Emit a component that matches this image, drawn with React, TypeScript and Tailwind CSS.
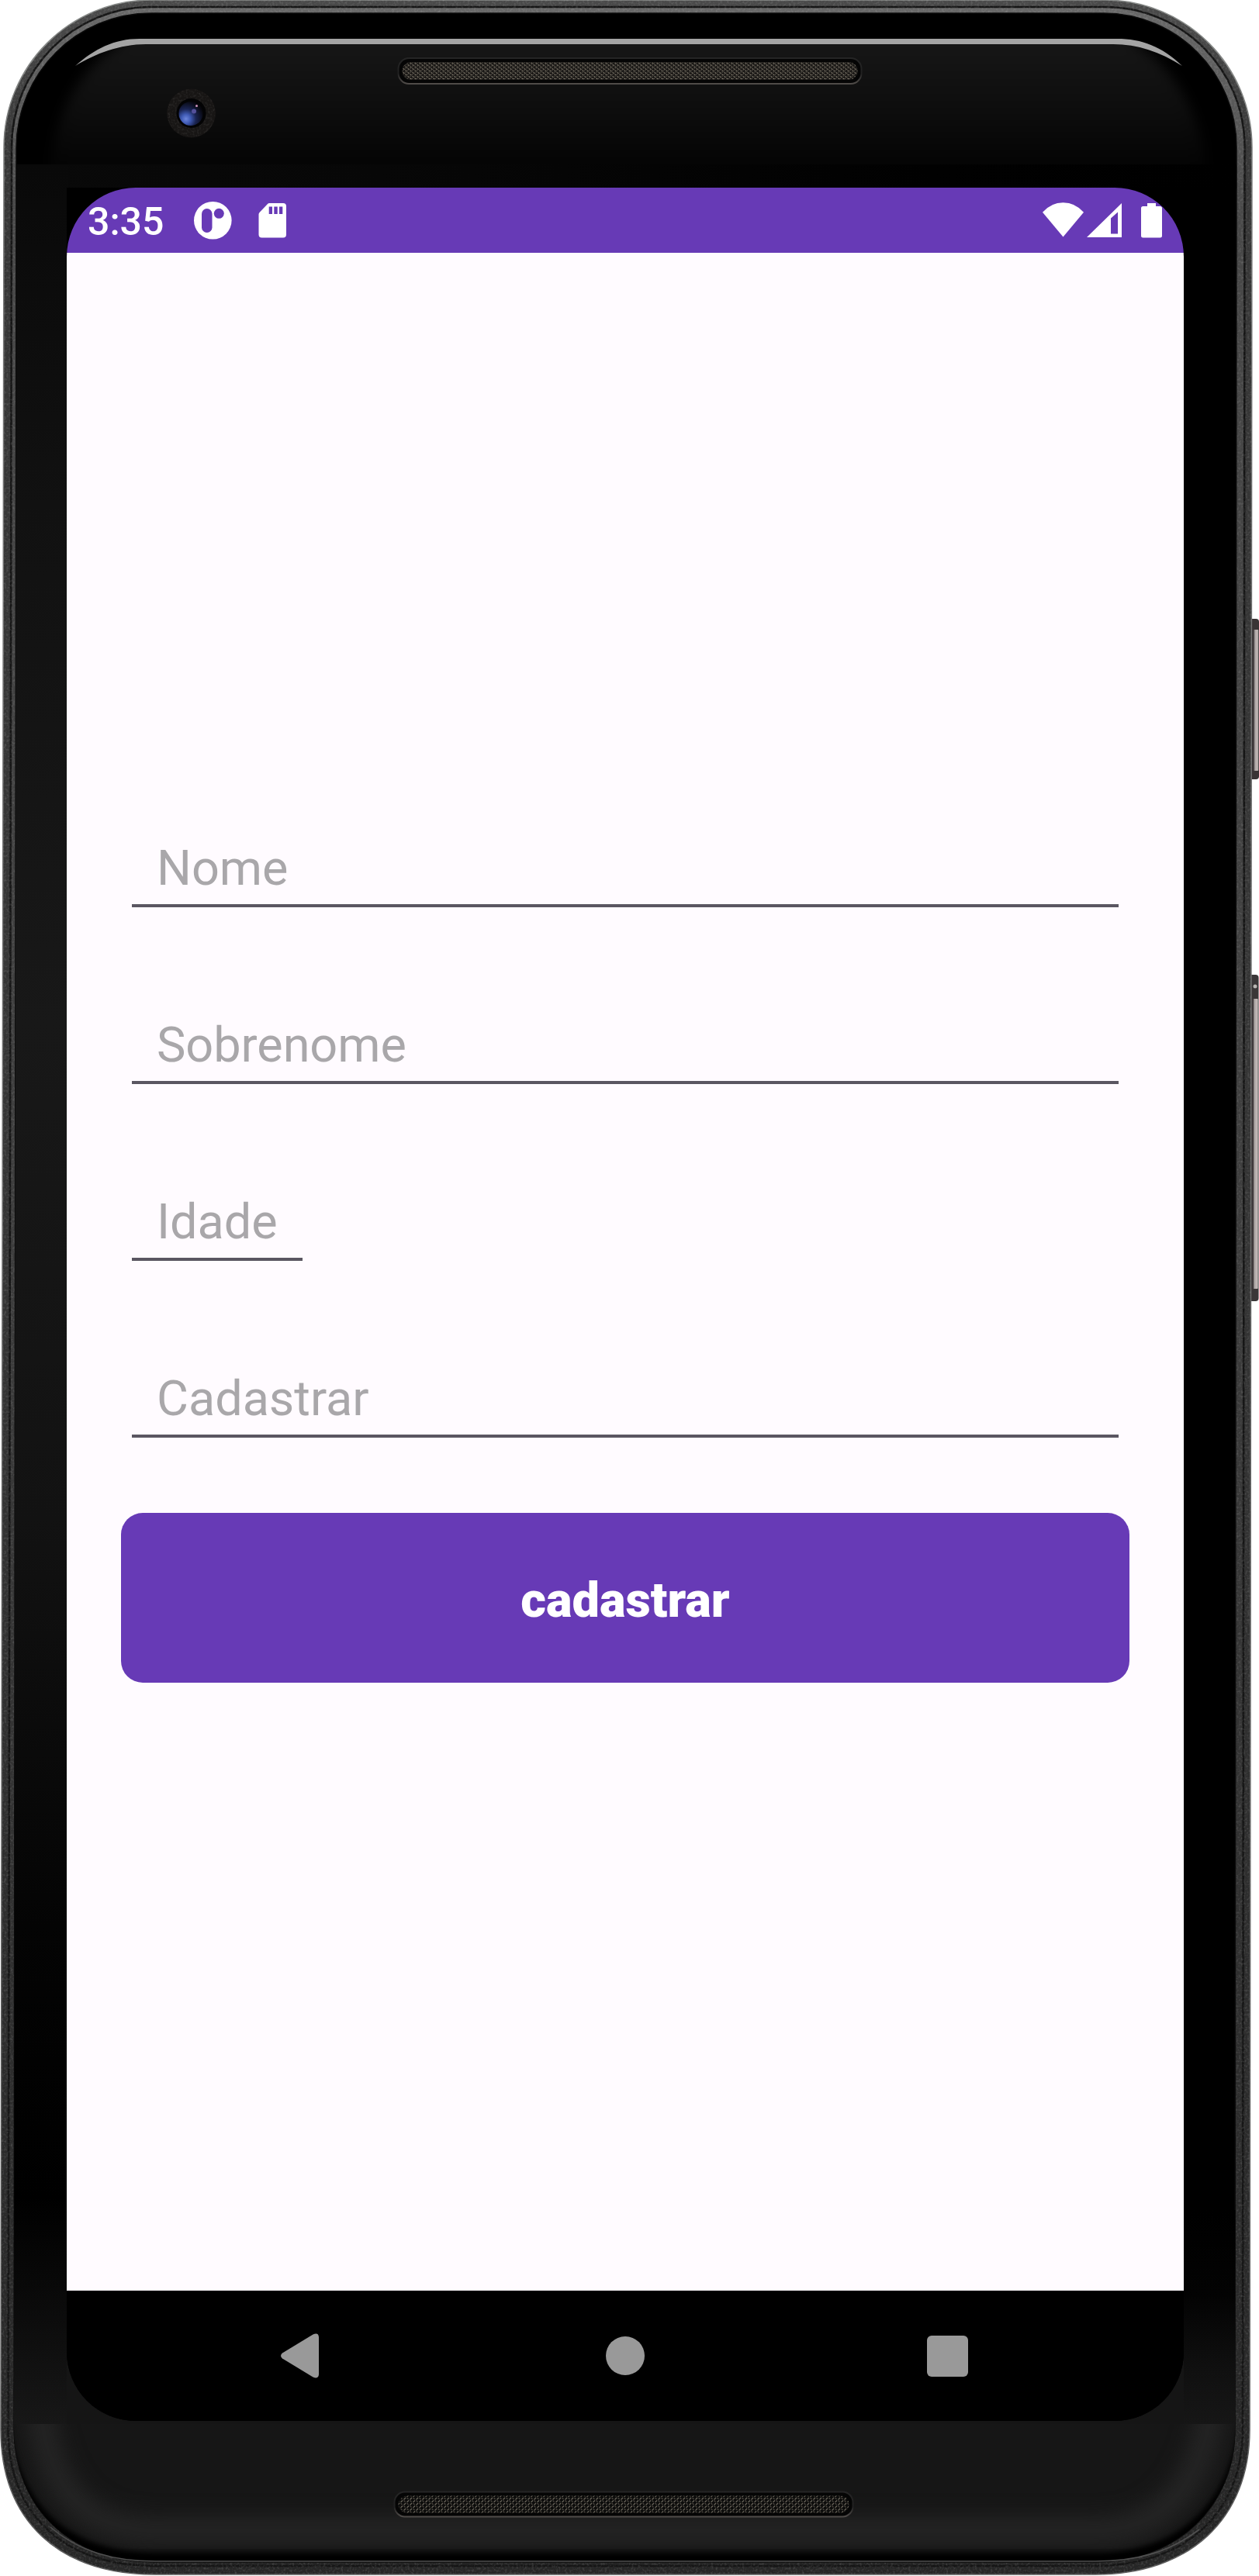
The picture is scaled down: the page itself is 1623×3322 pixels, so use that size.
import React from "react";

const OUTER =
  "M195 0H1424C1529 0 1614 85 1614 190L1611 3133C1611 3250 1532 3320 1412 3320H200C75 3320 1 3250 1 3133L5 190C5 85 90 0 195 0Z";
const GROOVE =
  "M195 9H1424C1524 9 1604.500 89 1604.500 190L1602 3133C1602 3242 1526 3309 1412 3309H200C81 3309 11 3242 10.500 3133L15 190C15 89 95 9 195 9Z";
const GLASS =
  "M195 17H1422C1517 17 1594 94 1594 190L1592 3133C1592 3233 1516 3304 1412 3304H200C90 3304 19 3233 18 3133L21 190C22 94 99 17 195 17Z";

function Speaker({ x, y, width, height, mesh }: { x: number; y: number; width: number; height: number; mesh: string }) {
  return (
    <g>
      <rect x={x} y={y} width={width} height={height} rx={height * 0.42} fill="#050505" stroke="url(#speakerEdge)" strokeWidth="2" />
      <rect x={x + 5} y={y + 5} width={width - 10} height={height - 10} rx={height * 0.36} fill={`url(#${mesh})`} />
    </g>
  );
}

function PhoneShell() {
  return (
    <svg className="absolute inset-0" width="1623" height="3322" viewBox="0 0 1623 3322" aria-hidden="true">
      <defs>
        <linearGradient id="rim" x1="0" y1="0" x2="0" y2="1">
          <stop offset="0" stopColor="#4a4a4a" />
          <stop offset="0.06" stopColor="#373737" />
          <stop offset="0.5" stopColor="#343434" />
          <stop offset="1" stopColor="#262626" />
        </linearGradient>
        <linearGradient id="innerRim" x1="0" y1="0" x2="0" y2="1">
          <stop offset="0" stopColor="#686868" />
          <stop offset="0.08" stopColor="#484848" />
          <stop offset="0.5" stopColor="#3c3c3c" />
          <stop offset="1" stopColor="#242424" />
        </linearGradient>
        <linearGradient id="rimEdge" x1="0" y1="0" x2="0" y2="1">
          <stop offset="0" stopColor="#8a8d8b" />
          <stop offset="0.1" stopColor="#777777" />
          <stop offset="1" stopColor="#5c5c5c" />
        </linearGradient>
        <linearGradient id="topSheen" x1="0" y1="56" x2="0" y2="212" gradientUnits="userSpaceOnUse">
          <stop offset="0" stopColor="#161616" />
          <stop offset="0.5" stopColor="#0e0e0e" />
          <stop offset="1" stopColor="#040404" />
        </linearGradient>
        <linearGradient id="topSeam" x1="18" y1="0" x2="1594" y2="0" gradientUnits="userSpaceOnUse">
          <stop offset="0" stopColor="#090909" />
          <stop offset="0.3" stopColor="#070707" />
          <stop offset="0.75" stopColor="#010101" />
          <stop offset="1" stopColor="#000000" />
        </linearGradient>
        <linearGradient id="leftBezel" x1="0" y1="212" x2="0" y2="3126" gradientUnits="userSpaceOnUse">
          <stop offset="0" stopColor="#090909" />
          <stop offset="0.15" stopColor="#111111" />
          <stop offset="0.38" stopColor="#181818" />
          <stop offset="0.6" stopColor="#121212" />
          <stop offset="0.78" stopColor="#040404" />
          <stop offset="0.9" stopColor="#000000" />
          <stop offset="0.94" stopColor="#090909" />
          <stop offset="1" stopColor="#171717" />
        </linearGradient>
        <linearGradient id="rightBezel" x1="0" y1="2850" x2="0" y2="3126" gradientUnits="userSpaceOnUse">
          <stop offset="0" stopColor="#000000" />
          <stop offset="0.4" stopColor="#030303" />
          <stop offset="0.75" stopColor="#101010" />
          <stop offset="1" stopColor="#161616" />
        </linearGradient>
        <linearGradient id="speakerEdge" x1="0" y1="0" x2="0" y2="1">
          <stop offset="0" stopColor="#252525" />
          <stop offset="0.6" stopColor="#202020" />
          <stop offset="1" stopColor="#504c49" />
        </linearGradient>
        <linearGradient id="sideKey" x1="0" y1="0" x2="1" y2="0">
          <stop offset="0" stopColor="#2b2728" />
          <stop offset="0.35" stopColor="#453f41" />
          <stop offset="0.5" stopColor="#aaa3a2" />
          <stop offset="0.85" stopColor="#c3bab8" />
          <stop offset="1" stopColor="#777070" />
        </linearGradient>
        <pattern id="meshTop" width="6" height="5" patternUnits="userSpaceOnUse">
          <rect width="6" height="5" fill="#1a1816" />
          <path d="M0.500 1L2.500 2M3.500 3.500L5.500 4.500" stroke="#898273" strokeWidth="1.200" />
          <path d="M4.500 0.500L3 2M1.500 3L0.500 4.500" stroke="#544f47" strokeWidth="1" />
        </pattern>
        <pattern id="meshBottom" width="8" height="7" patternUnits="userSpaceOnUse">
          <rect width="8" height="7" fill="#0c0c0b" />
          <path d="M0.500 3.500L3 1M4.500 7L7 4.500" stroke="#6e695e" strokeWidth="1.200" />
          <path d="M4.500 1L6.500 3M0.500 4.500L2.500 6.500" stroke="#4a463f" strokeWidth="1.200" />
        </pattern>
        <radialGradient id="lens" cx="0.3" cy="0.72" r="0.75">
          <stop offset="0" stopColor="#6d86dc" />
          <stop offset="0.25" stopColor="#405bb5" />
          <stop offset="0.55" stopColor="#1a2452" />
          <stop offset="1" stopColor="#07070d" />
        </radialGradient>
        <clipPath id="glassClip">
          <path d={GLASS} />
        </clipPath>
        <clipPath id="topClip">
          <path d="M30 212V140L97 85C123 69 155 57 188 57H1435C1466 57 1496 67 1524 85L1590 140V212Z" />
        </clipPath>
        <clipPath id="bottomClip">
          <rect y="3126" width="1623" height="196" />
        </clipPath>
        <filter id="soft" colorInterpolationFilters="sRGB">
          <feGaussianBlur stdDeviation="8" />
        </filter>
        <filter id="softNarrow" colorInterpolationFilters="sRGB">
          <feGaussianBlur stdDeviation="3" />
        </filter>
        <filter id="softWide" colorInterpolationFilters="sRGB">
          <feGaussianBlur stdDeviation="13" />
        </filter>
        <filter id="grain" x="0" y="0" width="100%" height="100%">
          <feTurbulence type="fractalNoise" baseFrequency="0.35" numOctaves="2" seed="4" />
          <feColorMatrix values="0 0 0 0 1  0 0 0 0 1  0 0 0 0 1  1.600 0 0 0 -0.720" />
          <feComposite in2="SourceGraphic" operator="in" />
        </filter>
      </defs>

      {/* Side keys */}
      <rect x="1610" y="798" width="13" height="207" rx="4" fill="#3a3435" />
      <rect x="1613" y="812" width="9.500" height="182" rx="1" fill="url(#sideKey)" />
      <rect x="1610" y="1257" width="12.500" height="421" rx="4" fill="#3a3637" />
      <rect x="1612" y="1288" width="10" height="374" rx="1" fill="url(#sideKey)" />
      <circle cx="1618" cy="1272" r="2.500" fill="#b8b5b2" />

      {/* Metal rim */}
      <path d={OUTER} fill="url(#rim)" />
      <path d={OUTER} fill="none" stroke="url(#rimEdge)" strokeWidth="1.500" />
      <path d={GROOVE} fill="url(#innerRim)" stroke="#151515" strokeWidth="2.500" />
      <path d={`${OUTER}${GLASS}`} fillRule="evenodd" fill="#ffffff" filter="url(#grain)" opacity="0.2" />
      <path d={GLASS} fill="#000000" stroke="#0b0b0b" strokeWidth="1.500" />

      {/* Glass face */}
      <g clipPath="url(#glassClip)">
        <g clipPath="url(#topClip)">
          <path d="M60 300C60 190 75 110 150 60L190 30H1424L1470 60C1540 110 1562 190 1562 300Z" fill="url(#topSheen)" filter="url(#soft)" />
        </g>
        <rect x="18" y="212" width="1576" height="31" fill="url(#topSeam)" />
        <rect x="18" y="212" width="70" height="2914" fill="url(#leftBezel)" />
        <rect x="1524" y="2850" width="70" height="276" fill="url(#rightBezel)" />
        <rect x="86" y="3030" width="1440" height="96" fill="#151515" />
        <rect x="86" y="242" width="90" height="90" fill="#000000" />
        <g clipPath="url(#bottomClip)">
          <rect y="3126" width="1623" height="196" fill="#161616" />
          <path d="M48 3040C48 3190 90 3264 205 3264H1412C1510 3264 1566 3190 1566 3040" fill="none" stroke="#242424" strokeWidth="36" filter="url(#softWide)" />
          <path
            d="M12 3120C22 3232 92 3292 200 3292H1412C1516 3292 1586 3232 1598 3120V3330H12Z"
            fill="#000000"
            filter="url(#softNarrow)"
          />
        </g>
      </g>
      <path d="M65 3259C103 3291 147 3303 200 3303H1412C1466 3303 1508 3291 1546 3262" fill="none" stroke="#505050" strokeWidth="1.600" />
      <path d="M97 85C122 63 147 50 180 50H1440C1472 50 1498 60 1524 85C1496 67 1466 57 1435 57H188C155 57 123 69 97 85Z" fill="#a4a4a4" />

      <Speaker x={513.5} y={75} width={597} height={33} mesh="meshTop" />
      <Speaker x={508.5} y={3213.5} width={591} height={32} mesh="meshBottom" />

      {/* Front camera */}
      <circle cx="246.500" cy="146" r="31.500" fill="#171514" />
      <circle cx="246.500" cy="146" r="31" fill="#ffffff" filter="url(#grain)" opacity="0.13" />
      <circle cx="246.500" cy="146" r="19" fill="#030304" />
      <circle cx="246" cy="146.500" r="15.500" fill="url(#lens)" />
      <circle cx="250" cy="143.500" r="3" fill="#54509a" />
      <circle cx="253.500" cy="136.500" r="1.500" fill="#d196bd" />
    </svg>
  );
}

function StatusBar() {
  return (
    <header className="flex h-[84px] items-start bg-[#673ab6] pl-[27px] text-white">
      <span className="mt-[15px] w-[137px] text-[50px] leading-[59px] font-medium">3:35</span>
      <svg className="mt-[18px]" width="49" height="49" viewBox="0 0 49 49">
        <circle cx="24.300" cy="24.300" r="24.300" fill="currentColor" />
        <rect x="10" y="9" width="13.500" height="31" rx="6.750" fill="#673ab6" />
        <circle cx="32.300" cy="15.300" r="6.500" fill="#673ab6" />
      </svg>
      <svg className="mt-5 ml-[34px]" width="36" height="45" viewBox="0 0 36 45">
        <path
          fill="currentColor"
          fillRule="evenodd"
          d="M14 0H32Q36 0 36 4V40.500Q36 44.500 32 44.500H4.500Q0.500 44.500 0.500 40.500V14.500Q0.500 13 1.500 12L12 1Q13 0 14 0ZM13.700 4.500V14H18V4.500ZM20.300 4.500V14H24.700V4.500ZM27 4.500V14H31.300V4.500Z"
        />
      </svg>
      <svg className="mt-[19px] mr-1 ml-auto" width="53" height="45" viewBox="0 0 53 45">
        <path fill="currentColor" d="M26.500 44.500L0 12.800Q11 0.300 26.500 0.300T53 12.800Z" />
      </svg>
      <svg className="mt-5" width="45" height="44" viewBox="0 0 45 44">
        <path fill="currentColor" fillRule="evenodd" d="M45 0V44H0ZM40 11.500L31 19.500V39.500H40Z" />
      </svg>
      <svg className="mt-5 mr-7 ml-[25px]" width="27" height="45" viewBox="0 0 27 45">
        <path
          fill="currentColor"
          d="M8 0H19V4H24.500Q27 4 27 6.500V42Q27 44.500 24.500 44.500H2.500Q0 44.500 0 42V6.500Q0 4 2.500 4H8Z"
        />
      </svg>
    </header>
  );
}

function Field({ label, short = false }: { label: string; short?: boolean }) {
  return (
    <div
      className={
        short
          ? "flex h-22 w-55 items-start border-b-4 border-[#5a5661] pl-8 text-[#a9a7aa]"
          : "flex h-22 w-[1272px] items-start border-b-4 border-[#5a5661] pl-8 text-[#a9a7aa]"
      }
    >
      <span className="pt-px text-[63px] leading-[74px] tracking-[-0.05px]">{label}</span>
    </div>
  );
}

function NavigationBar() {
  return (
    <nav className="flex h-[168px] items-center justify-center gap-[315px] bg-black text-[#999999]">
      <button className="flex size-[100px] items-center justify-center" aria-label="Voltar">
        <svg className="-ml-2.5" width="50" height="58" viewBox="0 0 50 58">
          <path fill="currentColor" d="M42.500 1.600Q49.500 -1.500 50 5V53Q49.500 59.500 42.500 56.400L3 32.500Q-1 29 3 25.500Z" />
        </svg>
      </button>
      <button className="flex size-[100px] items-center justify-center" aria-label="Início">
        <span className="size-[50px] rounded-full bg-[#999999]" />
      </button>
      <button className="flex size-[100px] items-center justify-center" aria-label="Recentes">
        <span className="size-[53px] rounded-[6px] bg-[#999999]" />
      </button>
    </nav>
  );
}

export default function App() {
  return (
    <div className="relative h-[3322px] w-[1623px] overflow-hidden bg-white pt-[242px] pl-[86px] font-['Roboto',sans-serif]">
      <PhoneShell />
      <div className="relative flex h-[2880px] w-[1440px] flex-col overflow-hidden rounded-[89px] bg-black">
        <StatusBar />
        <main className="flex grow flex-col bg-[#fffbff] px-[70px] pt-[756px]">
          <form className="flex flex-col" onSubmit={(event) => event.preventDefault()}>
            <div className="flex flex-col gap-[140px] pl-[14px]">
              <Field label="Nome" />
              <Field label="Sobrenome" />
              <Field label="Idade" short />
              <Field label="Cadastrar" />
            </div>
            <button
              type="submit"
              className="mt-[97px] flex h-[219px] w-full items-center justify-center rounded-[28px] bg-[#673ab6] pt-1.5 text-[63px] leading-[74px] font-black text-white"
            >
              cadastrar
            </button>
          </form>
        </main>
        <NavigationBar />
      </div>
    </div>
  );
}
